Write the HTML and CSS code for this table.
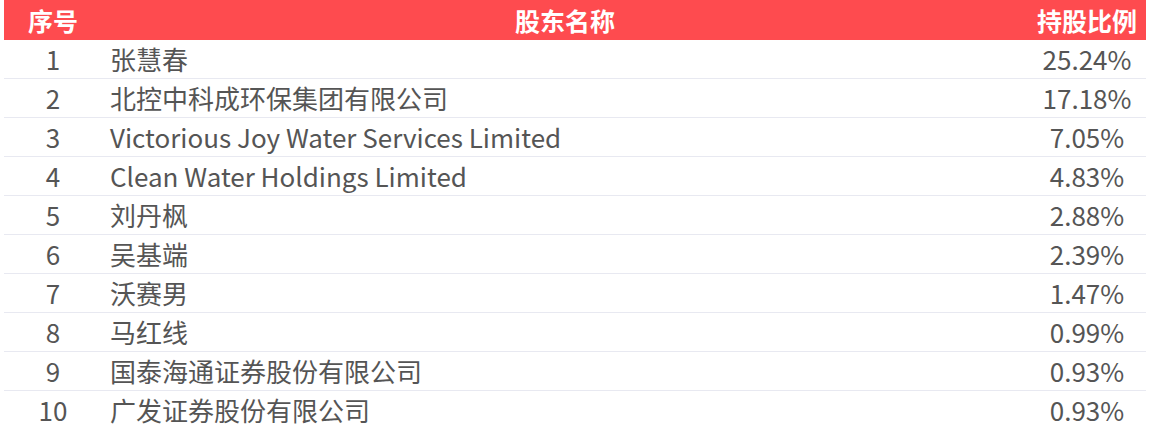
FILE: index.html
```html
<!DOCTYPE html>
<html lang="zh">
<head>
<meta charset="utf-8">
<link rel="stylesheet" href="styles.css">
</head>
<body>
<table class="holders">
  <colgroup>
    <col class="c-no">
    <col class="c-name">
    <col class="c-pct">
  </colgroup>
  <thead>
    <tr><th>序号</th><th>股东名称</th><th>持股比例</th></tr>
  </thead>
  <tbody>
    <tr><td class="no">1</td><td class="name">张慧春</td><td class="pct">25.24%</td></tr>
    <tr><td class="no">2</td><td class="name">北控中科成环保集团有限公司</td><td class="pct">17.18%</td></tr>
    <tr><td class="no">3</td><td class="name">Victorious Joy Water Services Limited</td><td class="pct">7.05%</td></tr>
    <tr><td class="no">4</td><td class="name">Clean Water Holdings Limited</td><td class="pct">4.83%</td></tr>
    <tr><td class="no">5</td><td class="name">刘丹枫</td><td class="pct">2.88%</td></tr>
    <tr><td class="no">6</td><td class="name">吴基端</td><td class="pct">2.39%</td></tr>
    <tr><td class="no">7</td><td class="name">沃赛男</td><td class="pct">1.47%</td></tr>
    <tr><td class="no">8</td><td class="name">马红线</td><td class="pct">0.99%</td></tr>
    <tr><td class="no">9</td><td class="name">国泰海通证券股份有限公司</td><td class="pct">0.93%</td></tr>
    <tr><td class="no">10</td><td class="name">广发证券股份有限公司</td><td class="pct">0.93%</td></tr>
  </tbody>
</table>
</body>
</html>
```
FILE: styles.css
```css
html, body {
  margin: 0;
  padding: 0;
  background: #ffffff;
}
body {
  padding: 0 4px;
  font-family: "Noto Sans CJK SC", "Noto Sans", sans-serif;
  color: #555555;
}
.holders {
  width: 1142px;
  border-collapse: collapse;
  table-layout: fixed;
}
.c-no { width: 98px; }
.c-pct { width: 118px; }
.holders th {
  background: #fe4b4f;
  color: #ffffff;
  font-size: 25px;
  font-weight: 700;
  height: 40px;
  padding: 0;
  text-align: center;
  line-height: 40px;
}
.holders td {
  height: 38px;
  padding: 0;
  font-size: 26px;
  line-height: 38px;
  border-bottom: 1px solid #e8e9f1;
  white-space: nowrap;
}
.holders tbody tr:last-child td {
  border-bottom: none;
}
.holders td.no { text-align: center; }
.holders td.name { padding-left: 8px; text-align: left; }
.holders td.pct { text-align: center; }
```
